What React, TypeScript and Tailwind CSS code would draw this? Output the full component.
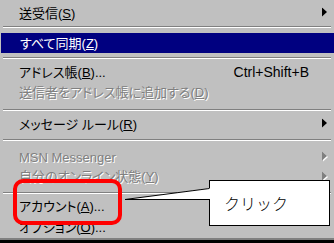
import type { ReactNode } from 'react';

const font = "font-['Liberation_Sans','Noto_Sans_CJK_JP',sans-serif] [font-feature-settings:'palt']";

const Arrow = ({ disabled }: { disabled?: boolean }) => (
  <svg width="7" height="11" viewBox="0 0 7 11" className="absolute right-[5px] top-1/2 -translate-y-1/2">
    {disabled && <polygon points="1,1 6,5.5 1,10" fill="#fff" />}
    <polygon points="0,0 5,4.5 0,9" fill={disabled ? '#808080' : '#000'} />
  </svg>
);

const Row = ({
  cls,
  children,
  shortcut,
  arrow,
  disabled,
  active,
}: {
  cls: string;
  children: ReactNode;
  shortcut?: string;
  arrow?: boolean;
  disabled?: boolean;
  active?: boolean;
}) => {
  let tone = 'text-black';
  if (active) tone = 'ml-[1px] bg-[#000080] text-white';
  if (disabled) tone = 'text-[#808080] [text-shadow:1px_1px_0_#fff]';
  return (
    <div className={`relative flex items-center pl-[19px] text-[13px] leading-none whitespace-nowrap ${cls} ${tone}`}>
      <span>{children}</span>
      {shortcut && <span className="absolute right-[25px] text-[14px]">{shortcut}</span>}
      {arrow && <Arrow disabled={disabled} />}
    </div>
  );
};

const Sep = ({ cls }: { cls: string }) => (
  <div className={cls}>
    <div className="mx-[3px] h-px bg-[#808080]" />
    <div className="mx-[3px] h-px bg-white" />
  </div>
);

export default function App() {
  return (
    <div className={`relative w-[334px] h-[243px] overflow-hidden bg-[#c0c0c0] ${font}`}>
      <div className="pt-[3px]">
        <Row cls="h-[20px]" arrow>
          送受信(<u>S</u>)
        </Row>
        <Sep cls="h-[10px] pt-[3px]" />
        <Row cls="h-[20px]" active>
          すべて同期(<u>Z</u>)
        </Row>
        <Sep cls="h-[9px] pt-[4px]" />
        <Row cls="h-[20px]" shortcut="Ctrl+Shift+B">
          アドレス帳(<u>B</u>)...
        </Row>
        <Row cls="h-[21px]" disabled>
          送信者をアドレス帳に追加する(<u>D</u>)
        </Row>
        <Sep cls="h-[11px] pt-[6px]" />
        <Row cls="h-[20px]" arrow>
          メッセージ ルール(<u>R</u>)
        </Row>
        <Sep cls="h-[13px] pt-[5px]" />
        <Row cls="h-[20px]" arrow disabled>
          MSN Messenger
        </Row>
        <Row cls="h-[19px]" arrow disabled>
          自分のオンライン状態(<u>Y</u>)
        </Row>
        <Sep cls="h-[10px] pt-[6px]" />
        <Row cls="h-[21px]">
          アカウント(<u>A</u>)...
        </Row>
        <Row cls="h-[21px]">
          オプション(<u>O</u>)...
        </Row>
        <div className="h-[2px] bg-[#808080]" />
        <div className="h-[3px] bg-black" />
      </div>

      {/* red highlight */}
      <div className="absolute left-[13px] top-[179px] w-[109px] h-[46px] border-4 border-[#ff0000] rounded-[10px]" />

      {/* callout */}
      <div className="absolute left-[209px] top-[180px] w-[121px] h-[46px] bg-white border border-black flex items-center pl-[14px]">
        <span className="text-[16px] font-light text-black font-['Noto_Sans_CJK_JP',sans-serif] [font-feature-settings:normal] leading-none">
          クリック
        </span>
      </div>
      <svg width="88" height="14" viewBox="0 0 88 14" className="absolute left-[124px] top-[187px]" shapeRendering="crispEdges">
        <polygon points="87,1 1,12.5 87,12.5" fill="#fff" />
        <line x1="1" y1="12.5" x2="85.5" y2="1.5" stroke="#000" strokeWidth="1" shapeRendering="auto" />
        <line x1="1" y1="12.5" x2="85.5" y2="12.5" stroke="#000" strokeWidth="1" />
      </svg>
    </div>
  );
}
